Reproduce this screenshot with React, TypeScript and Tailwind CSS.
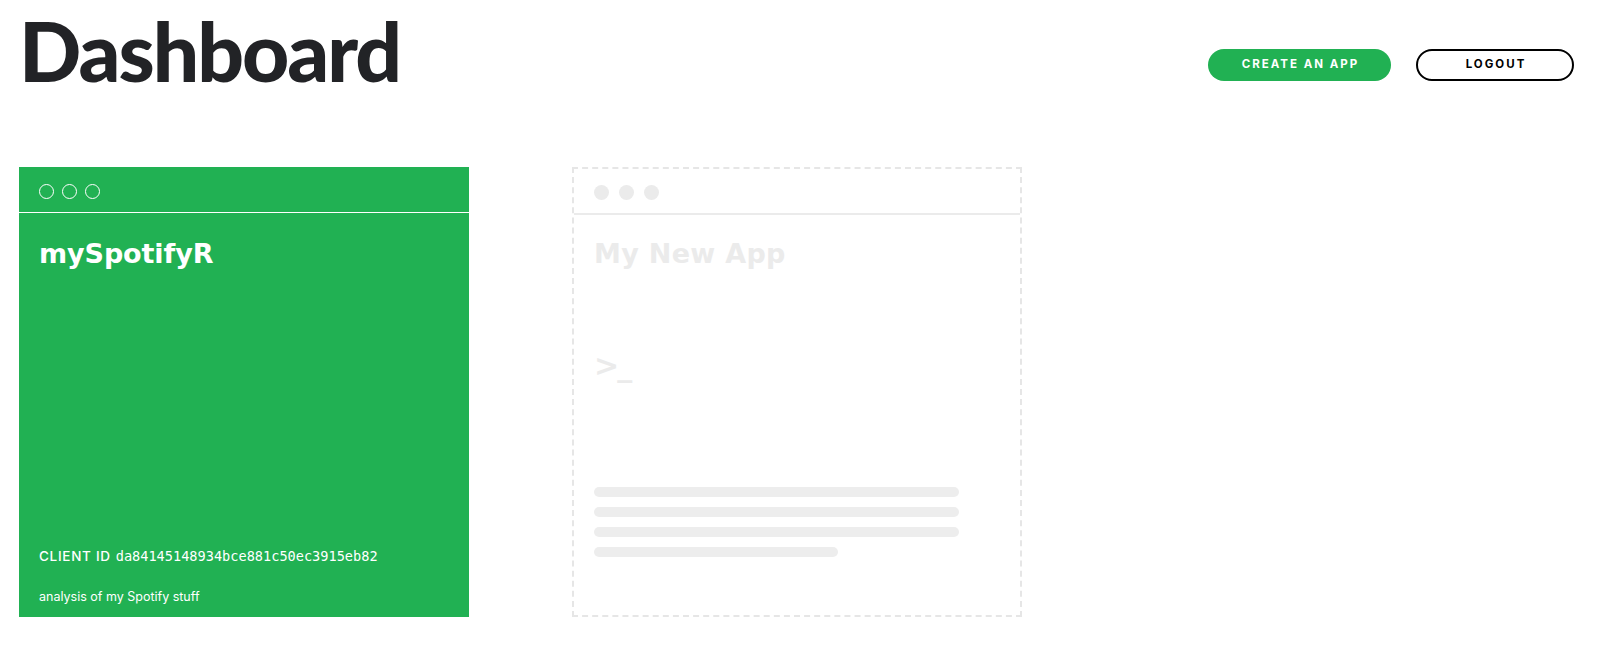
import React from "react";

export default function App() {
  return (
    <div className="min-h-[645px] w-full bg-white px-[19px] font-['Inter','Liberation_Sans',sans-serif]">
      <header className="flex items-start justify-between">
        <h1 className="mt-[9px] font-['Lato','Inter',sans-serif] text-[82px] font-black leading-none tracking-[-2px] text-[#222326]">
          Dashboard
        </h1>
        <div className="mt-[49px] mr-[10px] flex gap-[25px]">
          <button className="flex h-[32px] w-[183px] items-center justify-center rounded-full bg-[#21b153] pl-[2px] text-[11.5px] font-bold tracking-[2px] text-white">
            CREATE AN APP
          </button>
          <button className="flex h-[32px] w-[158px] items-center justify-center rounded-full border-2 border-black bg-white pl-[2px] text-[11.5px] font-bold tracking-[2px] text-black">
            LOGOUT
          </button>
        </div>
      </header>

      <main className="mt-[76px] flex gap-[103px]">
        {/* existing app card */}
        <div className="flex h-[450px] w-[450px] flex-col bg-[#21b153] text-white">
          <div className="flex h-[46px] items-center gap-[8px] border-b border-white px-[20px] pt-[3px]">
            <span className="h-[15px] w-[15px] rounded-full border border-white" />
            <span className="h-[15px] w-[15px] rounded-full border border-white" />
            <span className="h-[15px] w-[15px] rounded-full border border-white" />
          </div>
          <div className="flex flex-1 flex-col px-[20px] pt-[27px] pb-[14px]">
            <h2 className="font-['DejaVu_Sans',sans-serif] text-[27px] font-bold leading-none tracking-[-0.1px]">
              mySpotifyR
            </h2>
            <div className="mt-auto">
              <p className="flex items-baseline text-[13.5px] font-medium leading-none tracking-[0.7px]">
                <span>CLIENT ID</span>
                <span className="ml-[5px] font-['DejaVu_Sans_Mono',monospace] text-[13.6px] tracking-[0px]">
                  da84145148934bce881c50ec3915eb82
                </span>
              </p>
              <p className="mt-[27px] text-[12.5px] leading-none tracking-[0px]">
                analysis of my Spotify stuff
              </p>
            </div>
          </div>
        </div>

        {/* placeholder card */}
        <div className="flex h-[450px] w-[450px] flex-col border-2 border-dashed border-[#e6e6e6]">
          <div className="flex h-[46px] items-center gap-[10px] border-b-2 border-[#ebebeb] px-[20px] pt-[2px]">
            <span className="h-[15px] w-[15px] rounded-full bg-[#ebebeb]" />
            <span className="h-[15px] w-[15px] rounded-full bg-[#ebebeb]" />
            <span className="h-[15px] w-[15px] rounded-full bg-[#ebebeb]" />
          </div>
          <div className="flex flex-1 flex-col px-[20px] pt-[25px]">
            <h2 className="font-['DejaVu_Sans',sans-serif] text-[27px] font-bold leading-none tracking-[0.3px] text-[#ebebeb]">
              My New App
            </h2>
            <div className="mt-[84px] font-['DejaVu_Sans',sans-serif] text-[30px] font-bold leading-none tracking-[-2px] text-[#ebebeb]">
              &gt;_
            </div>
            <div className="mt-[106px] flex flex-col gap-[10px]">
              <div className="h-[10px] w-[365px] rounded-full bg-[#ededed]" />
              <div className="h-[10px] w-[365px] rounded-full bg-[#ededed]" />
              <div className="h-[10px] w-[365px] rounded-full bg-[#ededed]" />
              <div className="h-[10px] w-[244px] rounded-full bg-[#ededed]" />
            </div>
          </div>
        </div>
      </main>
    </div>
  );
}
